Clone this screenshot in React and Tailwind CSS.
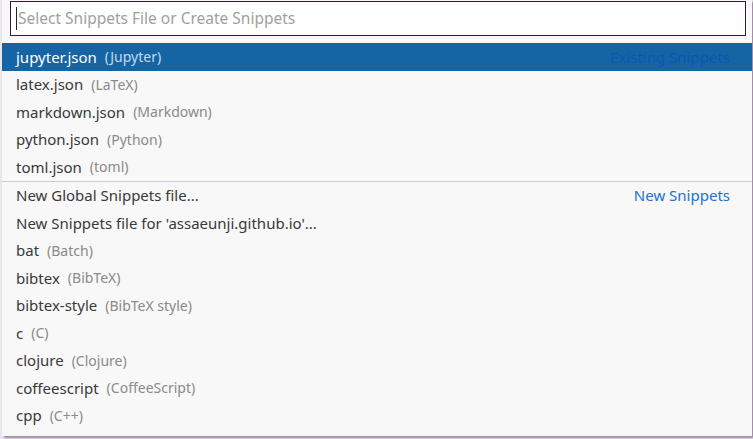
import React from "react";

const topItems = [
  { name: "jupyter.json", desc: "(Jupyter)" },
  { name: "latex.json", desc: "(LaTeX)" },
  { name: "markdown.json", desc: "(Markdown)" },
  { name: "python.json", desc: "(Python)" },
  { name: "toml.json", desc: "(toml)" },
];

const newItems = [
  { name: "New Global Snippets file..." },
  { name: "New Snippets file for 'assaeunji.github.io'..." },
  { name: "bat", desc: "(Batch)" },
  { name: "bibtex", desc: "(BibTeX)" },
  { name: "bibtex-style", desc: "(BibTeX style)" },
  { name: "c", desc: "(C)" },
  { name: "clojure", desc: "(Clojure)" },
  { name: "coffeescript", desc: "(CoffeeScript)" },
  { name: "cpp", desc: "(C++)" },
];

function Row({ item, selected, label }) {
  return (
    <div
      className={`h-[27.5px] flex items-center pl-[14px] pr-[22px] ${
        selected ? "bg-[#1565a5] text-white" : "text-[#383838]"
      }`}
    >
      <span>{item.name}</span>
      {item.desc && (
        <span className={`ml-[8px] text-[14px] ${selected ? "text-[#c5d9ec]" : "text-[#8a8a8a]"}`}>
          {item.desc}
        </span>
      )}
      {label && (
        <span className={`ml-auto ${selected ? "text-[#0d55b2]" : "text-[#1a72d2]"}`}>{label}</span>
      )}
    </div>
  );
}

export default function App() {
  return (
    <div
      className="w-[753px] h-[439px] bg-[#e9e6ec] overflow-hidden"
      style={{ fontFamily: "'Noto Sans', 'Open Sans', sans-serif" }}
    >
      <div className="ml-[2px] w-[750px] h-[436px] bg-[#f8f8f8] shadow-[2px_2px_2px_rgba(110,70,110,0.6)] text-[15px]">
        <div className="pt-[1px] pl-[8px] pr-[6px] pb-[7px]">
          <div className="h-[35px] border border-[#3a1838] bg-white flex items-center pl-[5px]">
            <span className="w-px h-[23px] bg-[#222] mr-[1px]" />
            <span className="text-[#9f9f9f] text-[15.5px]">Select Snippets File or Create Snippets</span>
          </div>
        </div>
        <div>
          {topItems.map((it, i) => (
            <Row key={it.name} item={it} selected={i === 0} label={i === 0 ? "Existing Snippets" : null} />
          ))}
        </div>
        <div className="border-t border-[#cfc8d6]">
          {newItems.map((it, i) => (
            <Row key={it.name} item={it} label={i === 0 ? "New Snippets" : null} />
          ))}
        </div>
      </div>
    </div>
  );
}
